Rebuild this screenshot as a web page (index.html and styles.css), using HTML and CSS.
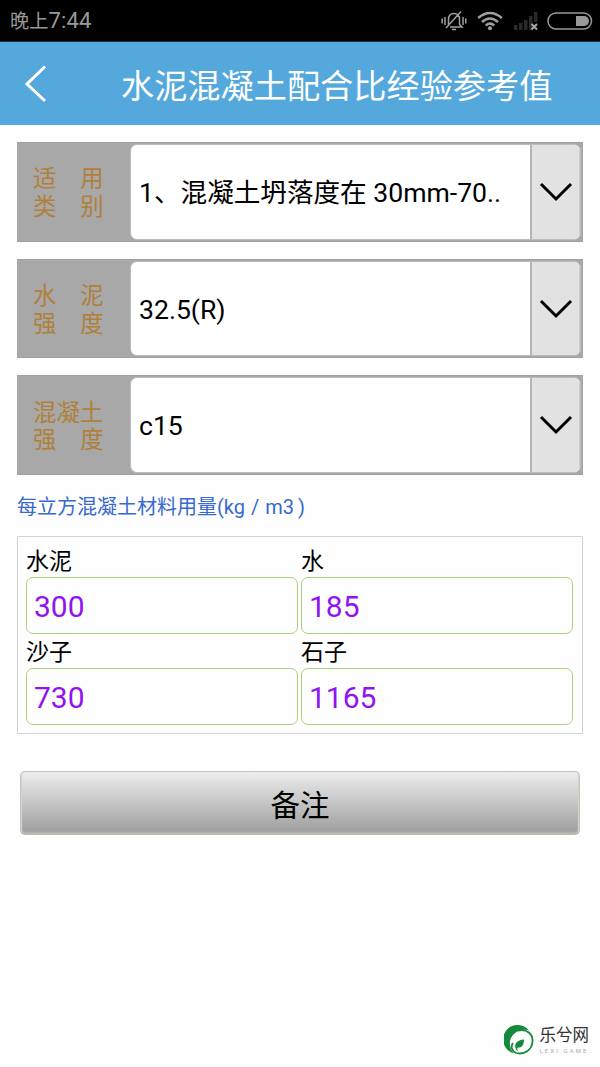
FILE: index.html
```html
<!DOCTYPE html>
<html lang="zh-CN">
<head>
    <meta charset="UTF-8">
    <meta name="viewport" content="width=device-width, initial-scale=1.0">
    <title>水泥混凝土配合比经验参考值</title>
    <link rel="stylesheet" href="styles.css">
</head>
<body>
    <div class="status-bar">
        <span class="time">晚上<span class="clock">7:44</span></span>
        <div class="status-icons">
            <!-- silent mode -->
            <svg class="icon-bell" width="26" height="22" viewBox="0 0 26 22" fill="none" stroke="#a0a0a0" stroke-width="1.5">
                <path d="M7.500 16V9.500c0-4 2-6 5.500-6s5.500 2 5.500 6V14.500l2.500 2.500H9M5 18L20 1.500M11 19.500h4M4 7v8M1.200 8.500v5M22 7v8M24.800 8.500v5"/>
            </svg>
            <svg class="icon-wifi" width="26" height="20" viewBox="0 0 26 20" fill="none" stroke="#a0a0a0" stroke-width="2.500">
                <path d="M1.200 7Q13-3 24.800 7M5 11Q13 4 21 11M8.800 14.500Q13 10.500 17.200 14.500"/>
                <circle cx="13" cy="17.200" r="2" fill="#a0a0a0" stroke="none"/>
            </svg>
            <svg class="icon-signal" width="25" height="20" viewBox="0 0 25 20">
                <path d="M0 14h3.500v5H0zM5 12h3.500v7H5zM10 9h3.500v10H10zM15 5h3.500v14H15zM20 1h3.500v10H20z" fill="#292929"/>
                <path d="M17.500 13l5.500 5.500M23 13l-5.500 5.500" stroke="#a8a8a8" stroke-width="2"/>
            </svg>
            <svg class="icon-battery" width="46" height="18" viewBox="0 0 46 18">
                <rect x="1" y="1" width="43.500" height="16" rx="8" fill="none" stroke="#999" stroke-width="1.500"/>
                <path d="M29 4h8a5 5 0 0 1 0 10H29z" fill="#999"/>
            </svg>
        </div>
    </div>

    <header>
        <svg class="back" width="24" height="38" viewBox="0 0 24 38" fill="none" stroke="#fff" stroke-width="3">
            <path d="M22 1.500L4 19l18 17"/>
        </svg>
        <h1>水泥混凝土配合比经验参考值</h1>
    </header>

    <main>
        <div class="select-row">
            <div class="label"><span>适&emsp;用</span><span>类&emsp;别</span></div>
            <div class="select">
                <span class="value">1、混凝土坍落度在 30mm-70..</span>
                <div class="arrow">
                    <svg width="34" height="22" viewBox="0 0 34 22" fill="none" stroke="#000" stroke-width="3"><path d="M2 3l15 15L32 3"/></svg>
                </div>
            </div>
        </div>
        <div class="select-row">
            <div class="label"><span>水&emsp;泥</span><span>强&emsp;度</span></div>
            <div class="select">
                <span class="value">32.5(R)</span>
                <div class="arrow">
                    <svg width="34" height="22" viewBox="0 0 34 22" fill="none" stroke="#000" stroke-width="3"><path d="M2 3l15 15L32 3"/></svg>
                </div>
            </div>
        </div>
        <div class="select-row">
            <div class="label"><span>混凝土</span><span>强&emsp;度</span></div>
            <div class="select">
                <span class="value">c15</span>
                <div class="arrow">
                    <svg width="34" height="22" viewBox="0 0 34 22" fill="none" stroke="#000" stroke-width="3"><path d="M2 3l15 15L32 3"/></svg>
                </div>
            </div>
        </div>

        <p class="caption">每立方混凝土材料用量(kg<span class="slash">/</span>m3<span class="paren">)</span></p>

        <div class="results">
            <div class="field">
                <div class="name">水泥</div>
                <div class="amount">300</div>
            </div>
            <div class="field">
                <div class="name">水</div>
                <div class="amount">185</div>
            </div>
            <div class="field">
                <div class="name">沙子</div>
                <div class="amount">730</div>
            </div>
            <div class="field">
                <div class="name">石子</div>
                <div class="amount">1165</div>
            </div>
        </div>

        <button class="remark">备注</button>
    </main>

    <footer>
        <svg width="30" height="30" viewBox="0 0 30 30">
            <path d="M25 5.500A14.500 14.500 0 1 0 10 28.500C5 24 4 14 10 9c4-4 11-5 15-3.500z" fill="#168a3c"/>
            <path d="M14 5.500c9-2 15 3.500 14.500 11C28 25 20 30 12.500 28c-5-1.500-6-7-3.500-10" fill="none" stroke="#168a3c" stroke-width="1.800"/>
            <path d="M12 24c-2.500-5 1-9 8-9.500 0 5-2 8.500-6 8-1 1-1 2 0 4-1-.5-1.700-1.500-2-2.500z" fill="#168a3c"/>
        </svg>
        <div class="brand">
            <span class="brand-cn">乐兮网</span>
            <span class="brand-en">LEXI GAME</span>
        </div>
    </footer>
</body>
</html>
```
FILE: styles.css
```css
* {
    box-sizing: border-box;
}

body {
    margin: 0;
    min-height: 1067px;
    display: flex;
    flex-direction: column;
    background-color: #fefefe;
    color: #000;
    font-family: Roboto, "Noto Sans CJK SC", sans-serif;
}

.status-bar {
    height: 42px;
    display: flex;
    justify-content: space-between;
    align-items: center;
    padding: 0 7px 0 10px;
    background-color: #000;
    border-bottom: 1px solid #21343f;
}

.time {
    color: #999;
    font-size: 19.2px;
    line-height: 40px;
    padding-top: 1px;
}

.clock {
    font-size: 22px;
    letter-spacing: 0.2px;
}

.status-icons {
    display: flex;
    align-items: center;
}

.icon-wifi {
    margin-left: 10px;
}

.icon-signal {
    margin-left: 11px;
}

.icon-battery {
    margin-left: 8px;
}

header {
    height: 83px;
    display: flex;
    align-items: center;
    padding-left: 23px;
    background-color: #54a8dc; /* 标题栏蓝色 */
    color: #fff;
}

h1 {
    margin: 7px 0 0 74px;
    font-size: 33.2px;
    font-weight: normal;
    line-height: 48px;
    white-space: nowrap;
}

main {
    flex: 1;
    padding: 17px 17px 0;
}

.select-row {
    height: 99.700px;
    margin-bottom: 17px;
    display: flex;
    background-color: #a8a8a8;
    border-top: 1px solid #a0a0a0;
    border-bottom: 1px solid #a0a0a0;
}

.label {
    width: 113px;
    display: flex;
    flex-direction: column;
    justify-content: center;
    padding: 4px 0 0 16px;
    color: #b0803a;
    font-size: 23.4px;
    line-height: 27.5px;
    white-space: nowrap;
}

.select {
    flex: 1;
    display: flex;
    margin: 1px 2px 1px 0;
    background-color: #fff;
    border: 1px solid #bcbcbc;
    border-radius: 7px;
    overflow: hidden;
}

.value {
    flex: 1;
    align-self: center;
    padding: 2px 0 0 8px;
    font-size: 26.6px;
    line-height: 40px;
    white-space: nowrap;
}

.arrow {
    width: 50px;
    display: flex;
    justify-content: center;
    align-items: center;
    background-color: #e2e2e2;
    border-left: 2px solid #b5b5b5;
    border-right: 1px solid #cfcfcf;
}

.caption {
    margin: 0;
    height: 44px;
    color: #3769cf;
    font-size: 20px;
    line-height: 30px;
}

.slash {
    margin: 0 6px;
}

.paren {
    margin-left: 4px;
}

.results {
    height: 198px;
    display: grid;
    grid-template-columns: 272px 272px;
    grid-template-rows: 91px 91px;
    column-gap: 3px;
    padding: 7px 0 0 8px;
    border: 1px solid #d3d3d7;
}

.name {
    height: 33px;
    font-size: 23px;
    line-height: 36px;
}

.amount {
    height: 57px;
    padding-left: 7px;
    border: 1.5px solid #a9d07b;
    border-radius: 7px;
    color: #9013f0;
    font-size: 30px;
    line-height: 58px;
}

.remark {
    display: block;
    width: 560px;
    height: 64px;
    margin: 37px 0 0 3px;
    padding: 0;
    border: 1px solid #c4c5bd;
    border-bottom: 2px solid #babbae;
    border-radius: 5px;
    background: linear-gradient(#efefef, #dedede 18%, #a2a2a2 95%, #aaa);
    box-shadow: inset 1px 0 1px #d5d5ce, inset -1px 0 1px #d5d5ce;
    color: #000;
    font-family: inherit;
    font-size: 29.5px;
}

footer {
    height: 46px;
    display: flex;
    justify-content: flex-end;
    padding-right: 11px;
    gap: 6px;
    color: #333;
}

footer svg {
    margin-top: 4px;
}

.brand {
    display: flex;
    flex-direction: column;
}

.brand-cn {
    font-size: 16.5px;
    line-height: 29px;
}

.brand-en {
    color: #aaa;
    font-size: 6px;
    line-height: 1px;
    letter-spacing: 2.1px;
}
```
